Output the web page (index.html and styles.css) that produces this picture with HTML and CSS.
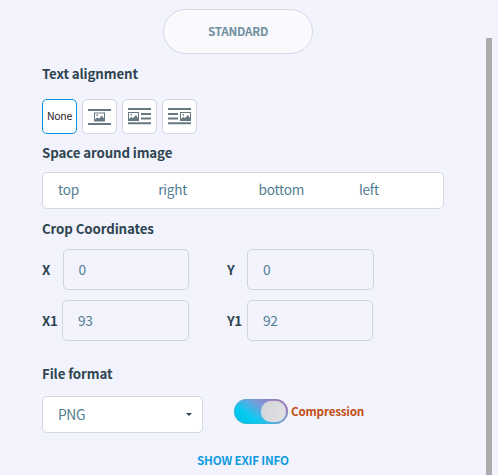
FILE: index.html
```
<!DOCTYPE html>
<html lang="en">
<head>
<meta charset="utf-8">
<title>Image settings</title>
<link rel="stylesheet" href="styles.css">
</head>
<body>
<main class="panel">
  <button class="standard">STANDARD</button>

  <h2 class="heading heading-align">Text alignment</h2>
  <div class="aligns">
    <button class="align active">None</button>
    <button class="align" aria-label="Center">
      <svg width="33" height="33" viewBox="0 0 33 33"><path class="line" d="M5 10h23M5 24h23"/><path class="pic" fill-rule="evenodd" d="M11 12.500h11v9H11zM12 13.500v6l2-2 2 1 3-3 2 3v-5z"/><path class="pic" d="M13.500 14.500h1.500v1.500h-1.500z"/></svg>
    </button>
    <button class="align" aria-label="Left">
      <svg width="33" height="33" viewBox="0 0 33 33"><path class="line" d="M5 9h23M18 14h10M18 18.500h10M5 23.300h23"/><path class="pic" fill-rule="evenodd" d="M5 12h11v9H5zM6 13v6l2-2 2 1 3-3 2 3v-5z"/><path class="pic" d="M7.500 14h1.500v1.500h-1.500z"/></svg>
    </button>
    <button class="align" aria-label="Right">
      <svg width="33" height="33" viewBox="0 0 33 33"><path class="line" d="M5 9h23M5 14h10M5 18.500h10M5 23.300h23"/><path class="pic" fill-rule="evenodd" d="M17 12h11v9H17zM18 13v6l2-2 2 1 3-3 2 3v-5z"/><path class="pic" d="M19.500 14h1.500v1.500h-1.500z"/></svg>
    </button>
  </div>

  <h2 class="heading heading-space">Space around image</h2>
  <div class="spaces"><span>top</span><span>right</span><span>bottom</span><span>left</span></div>

  <h2 class="heading heading-crop">Crop Coordinates</h2>
  <div class="crops">
    <div class="crop"><b class="name">X</b><span class="field">0</span></div>
    <div class="crop"><b class="name">Y</b><span class="field">0</span></div>
    <div class="crop"><b class="name name-narrow">X1</b><span class="field">93</span></div>
    <div class="crop crop-short"><b class="name">Y1</b><span class="field">92</span></div>
  </div>

  <h2 class="heading heading-format">File format</h2>
  <div class="format">
    <div class="select"><span>PNG</span><i class="caret"></i></div>
    <div class="toggle"><i class="knob"></i></div>
    <span class="compression">Compression</span>
  </div>
  <a class="exif">SHOW EXIF INFO</a>
</main>
<div class="scrollbar"></div>
</body>
</html>
```
FILE: styles.css
```
* { box-sizing: border-box; }
body {
  margin: 0;
  width: 498px;
  height: 475px;
  overflow: hidden;
  display: flex;
  background: #f2f3fd;
  font-family: "Noto Sans CJK JP", "Noto Sans", sans-serif;
  color: #2f4550;
}
button { font-family: inherit; padding: 0; }
.panel {
  width: 486px;
  height: 475px;
  padding: 9px 42px 0;
  display: flex;
  flex-direction: column;
}
.scrollbar { width: 6px; height: 437px; margin-top: 38px; background: #aaabad; }
.standard {
  width: 150px;
  height: 45px;
  margin-left: 121px;
  padding-bottom: 3px;
  border: 1px solid #d5dae2;
  border-radius: 23px;
  background: #f9f9fe;
  color: #71909f;
  font-size: 11.7px;
  font-weight: 700;
  letter-spacing: -0.25px;
}
.heading { margin: 0; height: 20px; font-size: 13.3px; line-height: 22px; font-weight: 700; letter-spacing: -0.12px; }
.heading-align { margin-top: 9px; }
.aligns { display: flex; gap: 5px; margin-top: 16px; }
.align {
  width: 35px;
  height: 35px;
  border: 1px solid #d0d6df;
  border-radius: 5px;
  background: #fff;
  color: #2a2428;
  font-size: 10.6px;
  letter-spacing: -0.35px;
}
.align.active { border-color: #0694d4; padding-bottom: 3px; }
.align svg { display: block; }
.line { stroke: #667980; stroke-width: 2; }
.pic { fill: #667980; }
.heading-space { margin-top: 8px; }
.spaces {
  width: 402px;
  height: 37px;
  margin-top: 10px;
  padding-left: 15px;
  display: grid;
  grid-template-columns: repeat(4, 100.300px);
  border: 1px solid #d2d7e0;
  border-radius: 5px;
  background: #fff;
  color: #527d90;
  font-size: 13.6px;
  line-height: 33px;
  letter-spacing: -0.25px;
}
.heading-crop { margin-top: 9px; }
.crops {
  display: grid;
  grid-template-columns: 185px 147px;
  row-gap: 10px;
  margin-top: 11px;
}
.crop { display: flex; height: 41px; line-height: 39px; }
.crop:nth-child(odd) { width: 147px; }
.crop-short { width: 146px; }
.name { width: 21px; font-size: 13.3px; line-height: 41px; letter-spacing: -0.4px; }
.name-narrow { width: 20px; }
.crop:nth-child(even) .name { width: 20px; }
.field {
  flex: 1;
  border: 1px solid #d0d4df;
  border-radius: 5px;
  padding-left: 15px;
  color: #527d90;
  font-size: 13.8px;
  letter-spacing: -0.4px;
}
.crop:first-child .field { padding-left: 14.500px; }
.heading-format { margin-top: 22px; }
.format { display: flex; align-items: center; height: 37px; margin-top: 13px; }
.select {
  width: 161px;
  height: 37px;
  padding: 0 10px 0 15px;
  display: flex;
  align-items: center;
  justify-content: space-between;
  border: 1px solid #d2d7e0;
  border-radius: 5px;
  background: #fff;
  color: #527d90;
  font-size: 13.8px;
  line-height: 35px;
  letter-spacing: -0.4px;
}
.caret { border: 3px solid transparent; border-top-color: #2f4550; border-bottom: 0; }
.toggle {
  width: 54px;
  height: 25px;
  margin: -6px 0 0 31px;
  padding: 2px;
  border-radius: 13px;
  background: linear-gradient(35deg, #00c3eb 10%, #08cbf1 30%, #759edc 58%, #a06cb4 90%);
  box-shadow: inset 0 0 2px #8099ac;
}
.knob {
  display: block;
  width: 25px;
  height: 21px;
  margin-left: 25px;
  border-radius: 12px;
  background: linear-gradient(120deg, #d2d4d7, #e2e2e4);
  box-shadow: 0 0 1px #fff;
}
.compression { margin: -8px 0 0 3px; color: #c24e12; font-size: 11.7px; font-weight: 700; letter-spacing: -0.22px; }
.exif {
  margin: 17px 0 0 155px;
  color: #119bdd;
  font-size: 11.7px;
  line-height: 20px;
  font-weight: 700;
  letter-spacing: -0.2px;
}
```
